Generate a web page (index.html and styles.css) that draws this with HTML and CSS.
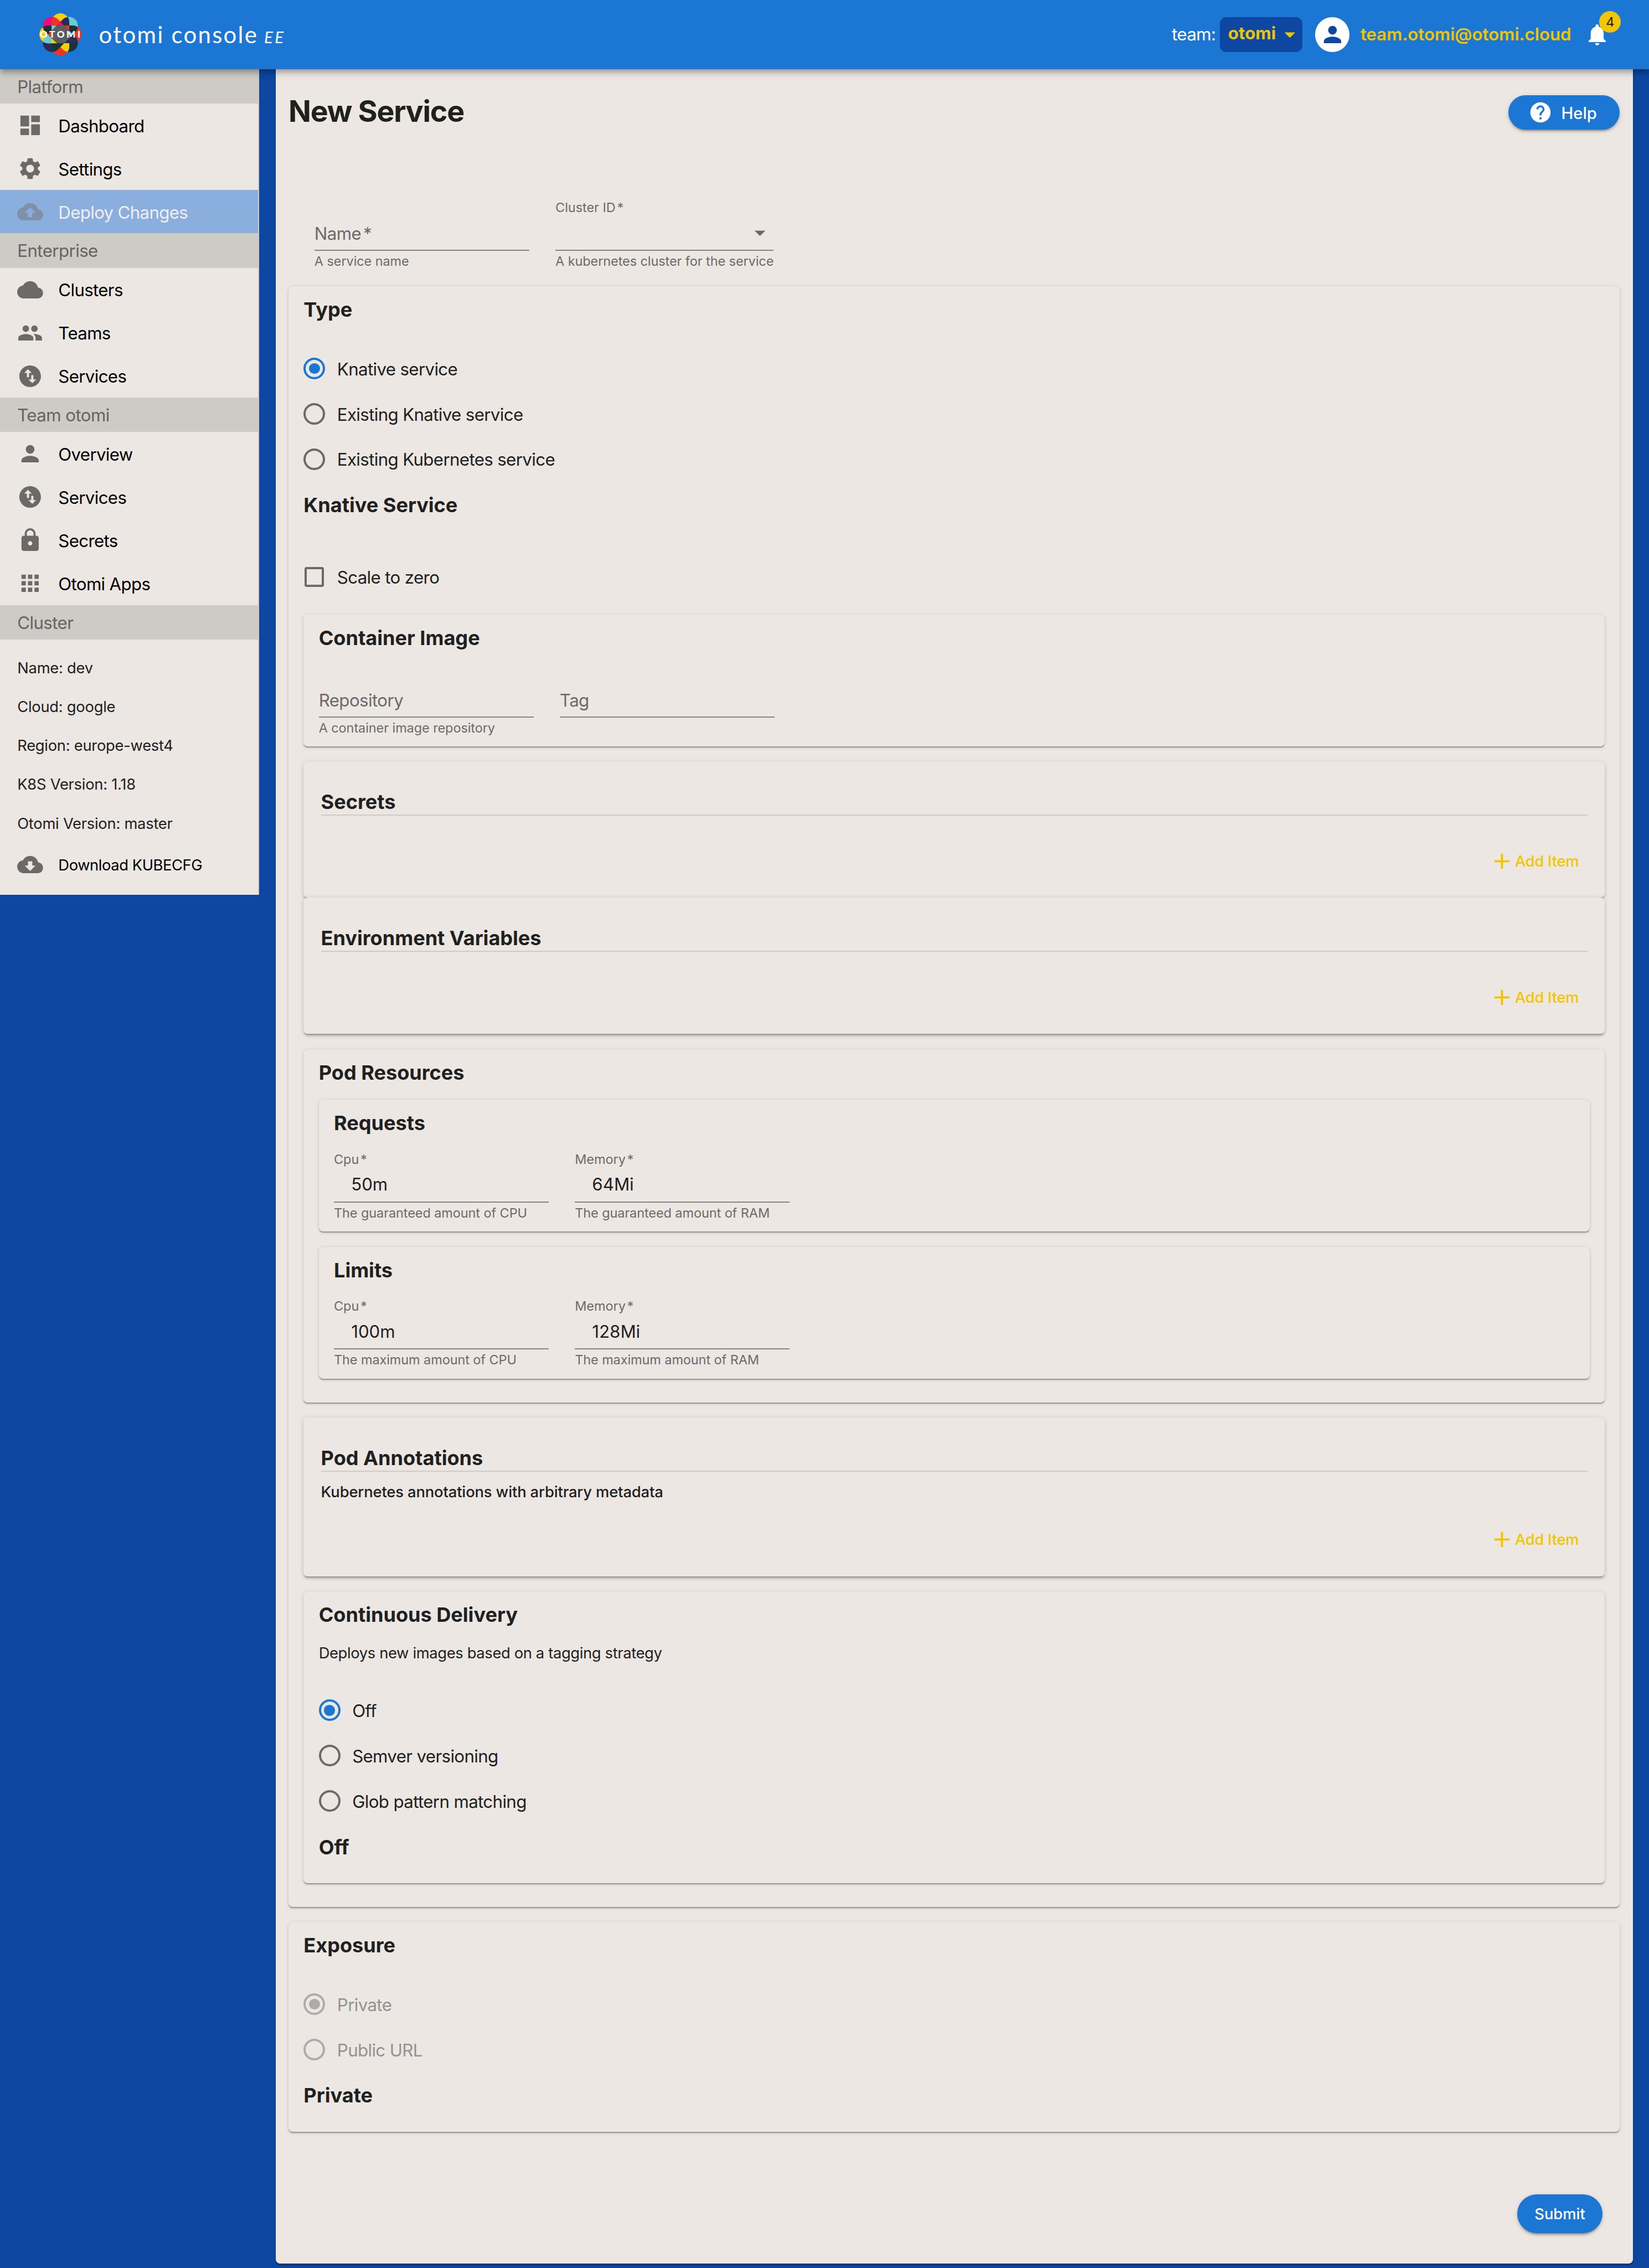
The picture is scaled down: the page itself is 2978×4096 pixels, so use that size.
FILE: index.html
```html
<!DOCTYPE html>
<html lang="en">
<head>
<meta charset="utf-8">
<title>otomi console</title>
<link rel="stylesheet" href="styles.css">
</head>
<body>
<svg class="defs" aria-hidden="true">
  <defs>
    <path id="petal" d="M-16.5 0V-22.5A16.5 16.5 0 0 1 16.5 -22.5V0Z"/>
    <clipPath id="petal-clip"><use href="#petal"/></clipPath>
    <symbol id="i-dashboard" viewBox="0 0 24 24"><path d="M3 13h8V3H3v10zm0 8h8v-6H3v6zm10 0h8V11h-8v10zm0-18v6h8V3h-8z"/></symbol>
    <symbol id="i-settings" viewBox="0 0 24 24"><path d="M19.14 12.94c.04-.3.06-.61.06-.94 0-.32-.02-.64-.07-.94l2.03-1.58c.18-.14.23-.41.12-.61l-1.92-3.32c-.12-.22-.37-.29-.59-.22l-2.39.96c-.5-.38-1.03-.7-1.62-.94l-.36-2.54c-.04-.24-.24-.41-.48-.41h-3.84c-.24 0-.43.17-.47.41l-.36 2.54c-.59.24-1.13.57-1.62.94l-2.39-.96c-.22-.08-.47 0-.59.22L2.74 8.87c-.12.21-.08.47.12.61l2.03 1.58c-.05.3-.09.63-.09.94s.02.64.07.94l-2.03 1.58c-.18.14-.23.41-.12.61l1.92 3.32c.12.22.37.29.59.22l2.39-.96c.5.38 1.03.7 1.62.94l.36 2.54c.05.24.24.41.48.41h3.84c.24 0 .44-.17.47-.41l.36-2.54c.59-.24 1.13-.56 1.62-.94l2.39.96c.22.08.47 0 .59-.22l1.92-3.32c.12-.22.07-.47-.12-.61l-2.01-1.58zM12 15.6c-1.98 0-3.6-1.62-3.6-3.6s1.62-3.6 3.6-3.6 3.6 1.62 3.6 3.6-1.62 3.6-3.6 3.6z"/></symbol>
    <symbol id="i-upload" viewBox="0 0 24 24"><path d="M19.35 10.04C18.67 6.59 15.64 4 12 4 9.11 4 6.6 5.64 5.35 8.04 2.34 8.36 0 10.91 0 14c0 3.31 2.69 6 6 6h13c2.76 0 5-2.24 5-5 0-2.64-2.05-4.78-4.65-4.96zM14 13v4h-4v-4H7l5-5 5 5h-3z"/></symbol>
    <symbol id="i-download" viewBox="0 0 24 24"><path d="M19.35 10.04C18.67 6.59 15.64 4 12 4 9.11 4 6.6 5.64 5.35 8.04 2.34 8.36 0 10.91 0 14c0 3.31 2.69 6 6 6h13c2.76 0 5-2.24 5-5 0-2.64-2.05-4.78-4.65-4.96zM17 13l-5 5-5-5h3V9h4v4h3z"/></symbol>
    <symbol id="i-cloud" viewBox="0 0 24 24"><path d="M19.35 10.04C18.67 6.59 15.64 4 12 4 9.11 4 6.6 5.64 5.35 8.04 2.34 8.36 0 10.91 0 14c0 3.31 2.69 6 6 6h13c2.76 0 5-2.24 5-5 0-2.64-2.05-4.78-4.65-4.96z"/></symbol>
    <symbol id="i-people" viewBox="0 0 24 24"><path d="M16 11c1.66 0 2.99-1.34 2.99-3S17.66 5 16 5c-1.66 0-3 1.34-3 3s1.34 3 3 3zm-8 0c1.66 0 2.99-1.34 2.99-3S9.66 5 8 5C6.34 5 5 6.34 5 8s1.34 3 3 3zm0 2c-2.33 0-7 1.17-7 3.5V19h14v-2.500c0-2.330-4.670-3.500-7-3.500zm8 0c-.29 0-.62.02-.97.05 1.160.84 1.970 1.970 1.970 3.450V19h6v-2.500c0-2.330-4.670-3.500-7-3.500z"/></symbol>
    <symbol id="i-swap" viewBox="0 0 24 24"><path d="M12 2C6.480 2 2 6.480 2 12s4.480 10 10 10 10-4.480 10-10S17.520 2 12 2zM6.500 9L10 5.500 13.500 9H11v4H9V9H6.500zm11 6L14 18.500 10.500 15H13v-4h2v4h2.500z"/></symbol>
    <symbol id="i-person" viewBox="0 0 24 24"><path d="M12 12c2.210 0 4-1.790 4-4s-1.790-4-4-4-4 1.790-4 4 1.790 4 4 4zm0 2c-2.670 0-8 1.340-8 4v2h16v-2c0-2.660-5.330-4-8-4z"/></symbol>
    <symbol id="i-lock" viewBox="0 0 24 24"><path d="M18 8h-1V6c0-2.760-2.240-5-5-5S7 3.240 7 6v2H6c-1.100 0-2 .9-2 2v10c0 1.100.9 2 2 2h12c1.100 0 2-.9 2-2V10c0-1.100-.9-2-2-2zm-6 9c-1.100 0-2-.9-2-2s.9-2 2-2 2 .9 2 2-.9 2-2 2zm3.100-9H8.900V6c0-1.710 1.390-3.100 3.100-3.100 1.710 0 3.100 1.390 3.100 3.100v2z"/></symbol>
    <symbol id="i-apps" viewBox="0 0 24 24"><path d="M4 8h4V4H4v4zm6 12h4v-4h-4v4zm-6 0h4v-4H4v4zm0-6h4v-4H4v4zm6 0h4v-4h-4v4zm6-10v4h4V4h-4zm-6 4h4V4h-4v4zm6 6h4v-4h-4v4zm0 6h4v-4h-4v4z"/></symbol>
    <symbol id="i-bell" viewBox="0 0 24 24"><path d="M12 22c1.100 0 2-.9 2-2h-4c0 1.100.89 2 2 2zm6-6v-5c0-3.070-1.640-5.640-4.500-6.320V4c0-.83-.67-1.500-1.500-1.500s-1.500.67-1.500 1.500v.68C7.630 5.360 6 7.920 6 11v5l-2 2v1h16v-1l-2-2z"/></symbol>
    <symbol id="i-help" viewBox="0 0 24 24"><path d="M12 2C6.480 2 2 6.480 2 12s4.480 10 10 10 10-4.480 10-10S17.520 2 12 2zm1 17h-2v-2h2v2zm2.070-7.750l-.9.920C13.450 12.900 13 13.500 13 15h-2v-.5c0-1.100.45-2.100 1.170-2.830l1.240-1.260c.37-.36.59-.86.59-1.410 0-1.100-.9-2-2-2s-2 .9-2 2H8c0-2.210 1.790-4 4-4s4 1.790 4 4c0 .88-.36 1.680-.93 2.250z"/></symbol>
    <symbol id="i-add" viewBox="0 0 24 24"><path d="M19 13h-6v6h-2v-6H5v-2h6V5h2v6h6v2z"/></symbol>
    <symbol id="i-caret" viewBox="0 0 24 24"><path d="M7 10l5 5 5-5z"/></symbol>
  </defs>
</svg>

<header class="appbar">
  <svg class="logo" viewBox="-39 -39 78 78">
    <use href="#petal" fill="#f2d00d"/>
    <use href="#petal" fill="#66cdd5" transform="rotate(45)"/>
    <use href="#petal" fill="#ef3522" transform="rotate(90)"/>
    <use href="#petal" fill="#1b3338" transform="rotate(135)"/>
    <use href="#petal" fill="#ef3522" transform="rotate(180)"/>
    <use href="#petal" fill="#2a2a58" transform="rotate(225)"/>
    <use href="#petal" fill="#f2d00d" transform="rotate(270)"/>
    <use href="#petal" fill="#ef0a7d" transform="rotate(315)"/>
    <g clip-path="url(#petal-clip)"><use href="#petal" fill="#ef3522" transform="rotate(-45)"/></g>
    <g transform="rotate(45)"><g clip-path="url(#petal-clip)"><use href="#petal" fill="#2a2a58" transform="rotate(-45)"/></g></g>
    <g transform="rotate(90)"><g clip-path="url(#petal-clip)"><use href="#petal" fill="#1b3338" transform="rotate(-45)"/></g></g>
    <g transform="rotate(135)"><g clip-path="url(#petal-clip)"><use href="#petal" fill="#2a2a58" transform="rotate(-45)"/></g></g>
    <g transform="rotate(180)"><g clip-path="url(#petal-clip)"><use href="#petal" fill="#f2d00d" transform="rotate(-45)"/></g></g>
    <g transform="rotate(225)"><g clip-path="url(#petal-clip)"><use href="#petal" fill="#1b3338" transform="rotate(-45)"/></g></g>
    <g transform="rotate(270)"><g clip-path="url(#petal-clip)"><use href="#petal" fill="#66cdd5" transform="rotate(-45)"/></g></g>
    <g transform="rotate(315)"><g clip-path="url(#petal-clip)"><use href="#petal" fill="#1b3338" transform="rotate(-45)"/></g></g>
    <path d="M0-23.300L7-16H-7Z" fill="#ef0a7d"/>
    <path d="M0-23.300L7-16H-7Z" fill="#ef3522" transform="rotate(45)"/>
    <path d="M0-23.300L7-16H-7Z" fill="#66cdd5" transform="rotate(90)"/>
    <path d="M0-23.300L7-16H-7Z" fill="#2a2a58" transform="rotate(135)"/>
    <path d="M0-23.300L7-16H-7Z" fill="#1b3338" transform="rotate(180)"/>
    <path d="M0-23.300L7-16H-7Z" fill="#f2d00d" transform="rotate(225)"/>
    <path d="M0-23.300L7-16H-7Z" fill="#ef3522" transform="rotate(270)"/>
    <path d="M0-23.300L7-16H-7Z" fill="#66cdd5" transform="rotate(315)"/>
    <path d="M-6.800-16.500H6.800L16.500-6.800V6.800L6.800 16.500H-6.800L-16.500 6.800V-6.800Z" fill="#5c5d5f"/>
    <text class="logo-text" x="-38" y="6.300" textLength="75">OTOMI</text>
  </svg>
  <div class="brand"><span class="brand-name">otomi console</span><span class="brand-edition">EE</span></div>
  <div class="account">
    <span class="team-label">team:</span>
    <div class="team-select"><span>otomi</span><svg class="icon team-caret"><use href="#i-caret"/></svg></div>
    <div class="avatar"><svg class="icon"><use href="#i-person"/></svg></div>
    <span class="email">team.otomi@otomi.cloud</span>
    <div class="bell"><svg class="icon"><use href="#i-bell"/></svg><span class="badge">4</span></div>
  </div>
</header>

<div class="layout">
  <nav class="sidebar">
    <h2 class="nav-head">Platform</h2>
    <a class="nav-item"><svg class="icon"><use href="#i-dashboard"/></svg><span>Dashboard</span></a>
    <a class="nav-item"><svg class="icon"><use href="#i-settings"/></svg><span>Settings</span></a>
    <a class="nav-item nav-item-disabled"><svg class="icon"><use href="#i-upload"/></svg><span>Deploy Changes</span></a>
    <h2 class="nav-head">Enterprise</h2>
    <a class="nav-item"><svg class="icon"><use href="#i-cloud"/></svg><span>Clusters</span></a>
    <a class="nav-item"><svg class="icon"><use href="#i-people"/></svg><span>Teams</span></a>
    <a class="nav-item"><svg class="icon"><use href="#i-swap"/></svg><span>Services</span></a>
    <h2 class="nav-head">Team otomi</h2>
    <a class="nav-item"><svg class="icon"><use href="#i-person"/></svg><span>Overview</span></a>
    <a class="nav-item"><svg class="icon"><use href="#i-swap"/></svg><span>Services</span></a>
    <a class="nav-item"><svg class="icon"><use href="#i-lock"/></svg><span>Secrets</span></a>
    <a class="nav-item"><svg class="icon"><use href="#i-apps"/></svg><span>Otomi Apps</span></a>
    <h2 class="nav-head">Cluster</h2>
    <div class="cluster">
      <p>Name: dev</p>
      <p>Cloud: google</p>
      <p>Region: europe-west4</p>
      <p>K8S Version: 1.18</p>
      <p>Otomi Version: master</p>
      <a class="nav-item nav-item-small"><svg class="icon"><use href="#i-download"/></svg><span>Download KUBECFG</span></a>
    </div>
  </nav>

  <main class="page">
    <div class="page-head">
      <h1>New Service</h1>
      <button class="btn btn-help"><svg class="icon"><use href="#i-help"/></svg><span>Help</span></button>
    </div>

    <div class="fields fields-top">
      <div class="field"><span class="label"></span><span class="value placeholder">Name<i>*</i></span><span class="helper">A service name</span></div>
      <div class="field"><span class="label">Cluster ID<i>*</i></span><span class="value value-select"><svg class="icon"><use href="#i-caret"/></svg></span><span class="helper">A kubernetes cluster for the service</span></div>
    </div>

    <section class="card card-outer">
      <h3 class="title">Type</h3>
      <div class="radios">
        <label class="option"><span class="radio radio-on"></span><span class="option-text">Knative service</span></label>
        <label class="option"><span class="radio"></span><span class="option-text">Existing Knative service</span></label>
        <label class="option"><span class="radio"></span><span class="option-text">Existing Kubernetes service</span></label>
      </div>
      <h3 class="title">Knative Service</h3>
      <label class="option option-check"><span class="checkbox"></span><span class="option-text">Scale to zero</span></label>

      <section class="card">
        <h3 class="title">Container Image</h3>
        <div class="fields">
          <div class="field"><span class="label"></span><span class="value placeholder">Repository</span><span class="helper">A container image repository</span></div>
          <div class="field"><span class="label"></span><span class="value placeholder">Tag</span><span class="helper"></span></div>
        </div>
      </section>

      <section class="card card-list">
        <h3 class="list-title">Secrets</h3>
        <button class="btn-add"><svg class="icon"><use href="#i-add"/></svg><span>Add Item</span></button>
      </section>
      <section class="card card-list card-joined">
        <h3 class="list-title">Environment Variables</h3>
        <button class="btn-add"><svg class="icon"><use href="#i-add"/></svg><span>Add Item</span></button>
      </section>

      <section class="card card-group">
        <h3 class="title">Pod Resources</h3>
        <section class="card card-first">
          <h3 class="title">Requests</h3>
          <div class="fields">
            <div class="field"><span class="label">Cpu<i>*</i></span><span class="value">50m</span><span class="helper">The guaranteed amount of CPU</span></div>
            <div class="field"><span class="label">Memory<i>*</i></span><span class="value">64Mi</span><span class="helper">The guaranteed amount of RAM</span></div>
          </div>
        </section>
        <section class="card">
          <h3 class="title">Limits</h3>
          <div class="fields">
            <div class="field"><span class="label">Cpu<i>*</i></span><span class="value">100m</span><span class="helper">The maximum amount of CPU</span></div>
            <div class="field"><span class="label">Memory<i>*</i></span><span class="value">128Mi</span><span class="helper">The maximum amount of RAM</span></div>
          </div>
        </section>
      </section>

      <section class="card card-list">
        <h3 class="list-title">Pod Annotations</h3>
        <p class="list-desc">Kubernetes annotations with arbitrary metadata</p>
        <button class="btn-add"><svg class="icon"><use href="#i-add"/></svg><span>Add Item</span></button>
      </section>

      <section class="card card-choice">
        <h3 class="title">Continuous Delivery</h3>
        <p class="desc">Deploys new images based on a tagging strategy</p>
        <div class="radios">
          <label class="option"><span class="radio radio-on"></span><span class="option-text">Off</span></label>
          <label class="option"><span class="radio"></span><span class="option-text">Semver versioning</span></label>
          <label class="option"><span class="radio"></span><span class="option-text">Glob pattern matching</span></label>
        </div>
        <h3 class="title">Off</h3>
      </section>
    </section>

    <section class="card card-choice">
      <h3 class="title">Exposure</h3>
      <div class="radios radios-disabled">
        <label class="option"><span class="radio radio-on"></span><span class="option-text">Private</span></label>
        <label class="option"><span class="radio"></span><span class="option-text">Public URL</span></label>
      </div>
      <h3 class="title">Private</h3>
    </section>

    <button class="btn btn-submit">Submit</button>
  </main>
</div>
</body>
</html>
```
FILE: styles.css
```css
/* 1rem = 10 layout pixels */
html { font-size: 19.515px; }
* { box-sizing: border-box; }
body {
  margin: 0;
  width: 152.6rem;
  height: 209.9rem;
  overflow: hidden;
  background: #0d47a1;
  color: #20201e;
  font-family: Inter, "Liberation Sans", sans-serif;
  font-size: 1.6rem;
}
h1, h2, h3, p { margin: 0; }
i { font-style: normal; margin-left: .12em; }
button { border: 0; font-family: inherit; }
.defs { position: absolute; width: 0; height: 0; }
.icon { display: block; width: 2.4rem; height: 2.4rem; fill: currentColor; flex: none; }

.appbar {
  position: relative;
  z-index: 2;
  display: flex;
  align-items: center;
  height: 6.4rem;
  padding: 0 2.6rem 0 3.65rem;
  background: #1b76d4;
  color: #fff;
  box-shadow: 0 .2rem .4rem -.1rem rgba(0,0,0,.2), 0 .4rem .5rem 0 rgba(0,0,0,.14), 0 .1rem 1rem 0 rgba(0,0,0,.12);
}
.logo { width: 3.9rem; height: 3.9rem; overflow: visible; }
.logo-text { font-family: Lato, sans-serif; font-weight: 900; font-size: 17.5px; fill: #fff; }
.brand { display: flex; align-items: baseline; margin-left: 1.6rem; font-family: Lato, sans-serif; }
.brand-name { font-size: 2.15rem; letter-spacing: .054em; }
.brand-edition { margin-left: .55rem; font-size: 1.5rem; font-style: italic; letter-spacing: .12em; }
.account { display: flex; align-items: center; margin-left: auto; }
.team-label { letter-spacing: -.02em; }
.team-select {
  display: flex; align-items: center;
  width: 7.6rem; height: 3.2rem; margin-left: .4rem; padding: 0 0 .2rem .75rem;
  border-radius: .6rem; background: #0d47a1; color: #f1c500; font-weight: 700;
}
.team-caret { margin-top: .2rem; margin-left: .1rem; }
.avatar {
  display: flex; align-items: center; justify-content: center;
  width: 3.2rem; height: 3.2rem; margin-left: 1.2rem; border-radius: 50%;
  background: #fff; color: #0d47a1;
}
.email { margin-left: 1rem; color: #f1c500; font-weight: 600; }
.bell { position: relative; margin-left: 1.2rem; width: 3.4rem; }
.badge {
  position: absolute; left: 1.4rem; top: -1rem;
  width: 2rem; height: 2rem; border-radius: 50%;
  background: #f1c500; color: #20201e; font-size: 1.2rem; line-height: 2rem; text-align: center;
}

.layout { display: flex; align-items: flex-start; }
.sidebar { width: 24rem; padding-right: 2px; background: #ece7e3; box-shadow: inset -2px 0 #cecac5; }
.nav-head { height: 3.2rem; padding-left: 1.6rem; background: #cecac5; color: #656461; font-size: 1.6rem; line-height: 3.3rem; font-weight: 400; letter-spacing: -.018em; }
.nav-item { display: flex; align-items: center; gap: 1.4rem; height: 4rem; padding-left: 1.6rem; color: #000; letter-spacing: -.021em; }
.nav-item span { padding-top: .12rem; }
.nav-item-small { letter-spacing: -.015em; }
.nav-item .icon { color: #6c6a68; }
.nav-item-disabled { background: #8aaedd; color: #f1eeec; }
.nav-item-disabled .icon { color: #7f90a8; }
.cluster { padding: .8rem 0; font-size: 1.4rem; letter-spacing: -.009em; }
.cluster p { height: 3.6rem; padding-left: 1.6rem; line-height: 3.65rem; }

.page {
  width: 125.6rem; height: 203.1rem; margin-left: 1.5rem; padding: 2.4rem 1.2rem 0;
  border-radius: 0 0 .4rem .4rem; background: #ece7e3;
  box-shadow: 0 .2rem .1rem -.1rem rgba(0,0,0,.2), 0 .1rem .1rem 0 rgba(0,0,0,.14), 0 .1rem .3rem 0 rgba(0,0,0,.12);
}
.page-head { display: flex; align-items: center; justify-content: space-between; height: 3.2rem; }
h1 { font-size: 2.75rem; line-height: 3.2rem; font-weight: 700; letter-spacing: -.023em; margin-top: -.15rem; }
.btn {
  display: flex; align-items: center; justify-content: center;
  background: #1b76d4; color: #fff; font-weight: 500;
  box-shadow: 0 .3rem .1rem -.2rem rgba(0,0,0,.2), 0 .2rem .2rem 0 rgba(0,0,0,.14), 0 .1rem .5rem 0 rgba(0,0,0,.12);
}
.btn-help { width: 10.3rem; height: 3.2rem; border-radius: 1.6rem; gap: .8rem; font-size: 1.5rem; padding: 0 .3rem 0 0; }
.btn-help span { padding-top: .12rem; }
.btn-help .icon { width: 2.25rem; height: 2.25rem; }
.btn-submit { width: 7.9rem; height: 3.6rem; border-radius: 1.8rem; margin: 5.8rem 1.6rem 0 auto; font-size: 1.4rem; padding: 0; }

.fields { display: flex; gap: 2.4rem; }
.fields-top { margin-top: 6.4rem; padding-left: 2.4rem; }
.field { display: flex; flex-direction: column; min-width: 19.9rem; }
.label { height: 1.6rem; font-size: 1.2rem; line-height: 1.6rem; color: #6c6a68; }
.value { height: 3.2rem; padding-left: 1.6rem; border-bottom: 2px solid #878581; line-height: 3.1rem; }
.placeholder { padding-left: 0; line-height: 3.3rem; color: #6c6a68; letter-spacing: -.018em; }
.value-select { display: flex; align-items: center; justify-content: flex-end; padding-right: .05rem; color: #6c6a68; }
.helper { height: 1.9rem; font-size: 1.2rem; line-height: 1.9rem; color: #6c6a68; letter-spacing: -.002em; }

.card {
  margin-top: 1.4rem; padding: 0 1.4rem .8rem; border-radius: .4rem; background: #ece7e3;
  box-shadow: 0 .2rem .1rem -.1rem rgba(0,0,0,.2), 0 .1rem .1rem 0 rgba(0,0,0,.14), 0 .1rem .3rem 0 rgba(0,0,0,.12);
}
.card-outer, .card-group { padding-bottom: 2.2rem; }
.card-choice { padding-bottom: 1.3rem; }
.card-first { margin-top: .5rem; }
.title { height: 4.2rem; font-size: 1.85rem; line-height: 4.35rem; font-weight: 700; }
.title + .fields { margin-top: .5rem; }
.radios { margin-top: 1.3rem; }
.desc { margin-top: .5rem; font-size: 1.4rem; line-height: 2rem; letter-spacing: -.0125em; }
.desc + .radios { margin-top: 2.2rem; }
.option { display: flex; align-items: center; gap: 1.1rem; height: 4.2rem; letter-spacing: -.02em; }
.option-text { padding-top: .12rem; }
.option-check { margin-top: 2.5rem; }
.radio { display: flex; align-items: center; justify-content: center; width: 2rem; height: 2rem; border: 4px solid #6c6a68; border-radius: 50%; }
.radio-on { border-color: #1b76d4; }
.radio-on::after { content: ""; width: 1rem; height: 1rem; border-radius: 50%; background: #1b76d4; }
.radios-disabled .option { color: #949290; }
.radios-disabled .radio { border-color: #aeaba8; }
.radios-disabled .radio-on::after { background: #aeaba8; }
.checkbox { width: 1.8rem; height: 1.8rem; margin: 0 .1rem; border: 4px solid #6c6a68; border-radius: .2rem; }

.card-list {
  padding: 2.6rem 1.6rem 1.6rem;
  box-shadow: 0 .3rem .1rem -.2rem rgba(0,0,0,.2), 0 .2rem .2rem 0 rgba(0,0,0,.14), 0 .1rem .5rem 0 rgba(0,0,0,.12);
}
.card-joined { margin-top: 0; }
.list-title { height: 2.4rem; font-size: 1.85rem; line-height: 2.3rem; font-weight: 700; border-bottom: 2px solid #cecac5; }
.list-desc { margin-top: .9rem; font-size: 1.4rem; line-height: 2rem; font-weight: 500; letter-spacing: -.004em; }
.btn-add { display: flex; align-items: center; height: 3.6rem; margin: 2.4rem 0 0 auto; padding: 0 .8rem 0 0; background: none; color: #f1c500; font-size: 1.4rem; font-weight: 500; letter-spacing: -.01em; }
.list-desc + .btn-add { margin-top: 1.6rem; }
```
